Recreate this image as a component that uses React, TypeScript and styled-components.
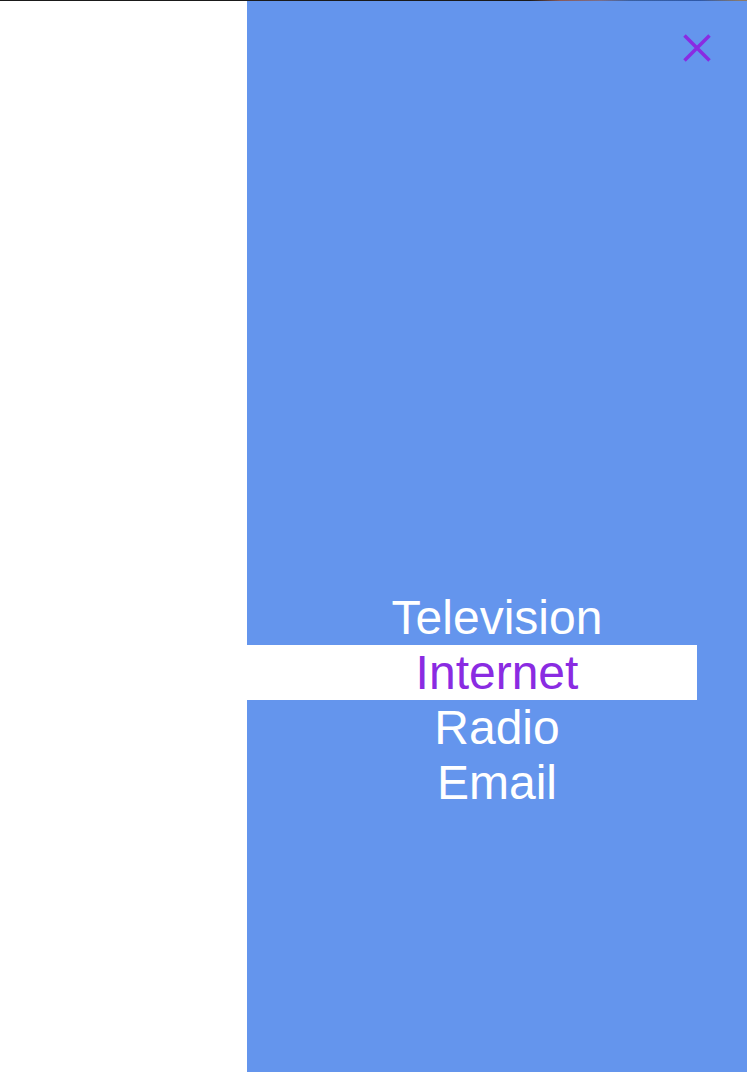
import React from "react";
import styled, { createGlobalStyle } from "styled-components";

const Global = createGlobalStyle`
  html, body { margin: 0; padding: 0; background: #ffffff; }
  body { font-family: "Liberation Sans", Arial, sans-serif; }
`;

const Page = styled.div`
  width: 747px;
  height: 1072px;
  display: flex;
  flex-direction: column;
  overflow: hidden;
`;

const TopStrip = styled.div`
  height: 1px;
  flex: none;
  background: linear-gradient(
    to right,
    #1a1a1a 0px,
    #1a1a1a 530px,
    #8a5a5a 560px,
    #7a6e8a 600px,
    #3a5fa0 630px,
    #2e58a8 700px,
    #8a7a6a 740px
  );
`;

const Body = styled.div`
  flex: 1;
  display: flex;
`;

const Spacer = styled.div`
  width: 247px;
  flex: none;
  background: #ffffff;
`;

const Panel = styled.nav`
  width: 500px;
  flex: none;
  background: #6495ed;
  display: flex;
  flex-direction: column;
`;

const Header = styled.div`
  display: flex;
  justify-content: flex-end;
  padding: 33px 36px 0 0;
`;

const CloseButton = styled.button`
  width: 28px;
  height: 28px;
  padding: 0;
  border: none;
  background: transparent;
  cursor: pointer;
  display: flex;
`;

const Menu = styled.ul`
  list-style: none;
  margin: 528px 0 0 0;
  padding: 0;
  display: flex;
  flex-direction: column;
`;

const Item = styled.li<{ $active?: boolean }>`
  width: 450px;
  height: 55px;
  box-sizing: border-box;
  padding-left: 50px;
  text-align: center;
  font-size: 48px;
  line-height: 55px;
  white-space: nowrap;
  color: ${(p) => (p.$active ? "#8a2be2" : "#ffffff")};
  background: ${(p) => (p.$active ? "#ffffff" : "transparent")};
  cursor: pointer;
`;

const items = ["Television", "Internet", "Radio", "Email"];

export default function App() {
  return (
    <Page>
      <Global />
      <TopStrip />
      <Body>
        <Spacer />
        <Panel>
          <Header>
            <CloseButton aria-label="Close">
              <svg width="28" height="28" viewBox="0 0 28 28">
                <path
                  d="M1.5 1.5 L26.5 26.5 M26.5 1.5 L1.5 26.5"
                  stroke="#8a2be2"
                  strokeWidth="3.5"
                  fill="none"
                />
              </svg>
            </CloseButton>
          </Header>
          <Menu>
            {items.map((it) => (
              <Item key={it} $active={it === "Internet"}>
                {it}
              </Item>
            ))}
          </Menu>
        </Panel>
      </Body>
    </Page>
  );
}
